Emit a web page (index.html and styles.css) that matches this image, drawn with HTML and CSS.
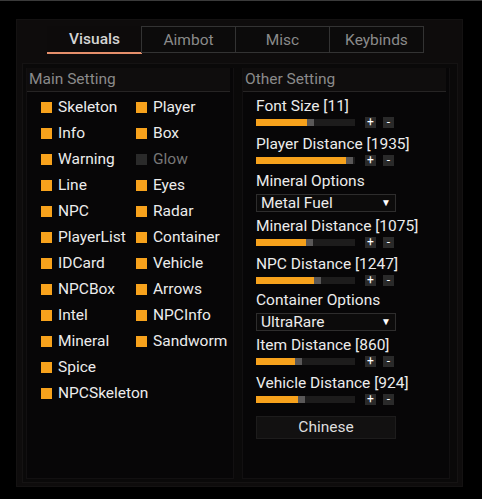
FILE: index.html
```html
<!DOCTYPE html>
<html>
<head>
<meta charset="utf-8">
<link rel="stylesheet" href="styles.css">
</head>
<body>
<div class="topline"></div>
<div class="frame">
  <div class="tabs">
    <div class="tab active">Visuals</div>
    <div class="tab">Aimbot</div>
    <div class="tab">Misc</div>
    <div class="tab">Keybinds</div>
  </div>
  <div class="content">
    <div class="col">
      <div class="head">Main Setting</div>
      <div class="checks">
        <div class="chk"><span class="box on"></span>Skeleton</div>
        <div class="chk"><span class="box on"></span>Player</div>
        <div class="chk"><span class="box on"></span>Info</div>
        <div class="chk"><span class="box on"></span>Box</div>
        <div class="chk"><span class="box on"></span>Warning</div>
        <div class="chk off"><span class="box"></span>Glow</div>
        <div class="chk"><span class="box on"></span>Line</div>
        <div class="chk"><span class="box on"></span>Eyes</div>
        <div class="chk"><span class="box on"></span>NPC</div>
        <div class="chk"><span class="box on"></span>Radar</div>
        <div class="chk"><span class="box on"></span>PlayerList</div>
        <div class="chk"><span class="box on"></span>Container</div>
        <div class="chk"><span class="box on"></span>IDCard</div>
        <div class="chk"><span class="box on"></span>Vehicle</div>
        <div class="chk"><span class="box on"></span>NPCBox</div>
        <div class="chk"><span class="box on"></span>Arrows</div>
        <div class="chk"><span class="box on"></span>Intel</div>
        <div class="chk"><span class="box on"></span>NPCInfo</div>
        <div class="chk"><span class="box on"></span>Mineral</div>
        <div class="chk"><span class="box on"></span>Sandworm</div>
        <div class="chk"><span class="box on"></span>Spice</div>
        <div class="chk empty"></div>
        <div class="chk"><span class="box on"></span>NPCSkeleton</div>
      </div>
    </div>
    <div class="col">
      <div class="head">Other Setting</div>
      <div class="opts">
        <div class="slider-group">
          <div class="label">Font Size [11]</div>
          <div class="srow"><div class="track"><div class="fill" style="width:51px"></div><div class="knob"></div></div><span class="btn">+</span><span class="btn">-</span></div>
        </div>
        <div class="slider-group">
          <div class="label">Player Distance [1935]</div>
          <div class="srow"><div class="track"><div class="fill" style="width:90px"></div><div class="knob"></div></div><span class="btn">+</span><span class="btn">-</span></div>
        </div>
        <div class="select-group">
          <div class="label">Mineral Options</div>
          <div class="select"><span>Metal Fuel</span><span class="arrow">▼</span></div>
        </div>
        <div class="slider-group">
          <div class="label">Mineral Distance [1075]</div>
          <div class="srow"><div class="track"><div class="fill" style="width:50px"></div><div class="knob"></div></div><span class="btn">+</span><span class="btn">-</span></div>
        </div>
        <div class="slider-group">
          <div class="label">NPC Distance [1247]</div>
          <div class="srow"><div class="track"><div class="fill" style="width:58px"></div><div class="knob"></div></div><span class="btn">+</span><span class="btn">-</span></div>
        </div>
        <div class="select-group second">
          <div class="label">Container Options</div>
          <div class="select"><span>UltraRare</span><span class="arrow">▼</span></div>
        </div>
        <div class="slider-group">
          <div class="label">Item Distance [860]</div>
          <div class="srow"><div class="track"><div class="fill" style="width:39px"></div><div class="knob"></div></div><span class="btn">+</span><span class="btn">-</span></div>
        </div>
        <div class="slider-group">
          <div class="label">Vehicle Distance [924]</div>
          <div class="srow"><div class="track"><div class="fill" style="width:42px"></div><div class="knob"></div></div><span class="btn">+</span><span class="btn">-</span></div>
        </div>
        <div class="button">Chinese</div>
      </div>
    </div>
  </div>
</div>
</body>
</html>
```

FILE: styles.css
```css
html, body {
  margin: 0;
  padding: 0;
  background: #000;
  width: 482px;
  height: 499px;
  overflow: hidden;
  font-family: Roboto, "Liberation Sans", sans-serif;
  font-size: 15.5px;
  color: #ececec;
}
.topline {
  height: 1px;
  background: #3a3a3a;
}
.frame {
  margin: 18px 0 0 16px;
  width: 447px;
  height: 468px;
  background: #0e0c0c;
  box-sizing: border-box;
  border: 1px solid #141212;
  padding-top: 6px;
}
.tabs {
  display: flex;
  margin-left: 30px;
  height: 28px;
}
.tab {
  width: 95px;
  height: 27px;
  box-sizing: border-box;
  border: 1px solid #333;
  margin-left: -1px;
  background: #0c0b0b;
  color: #8a8a8a;
  display: flex;
  align-items: center;
  justify-content: center;
}
.tab.active {
  border: none;
  margin-left: 0;
  height: 28px;
  border-bottom: 2px solid #e58f6b;
  color: #d4d4d4;
  font-weight: 500;
  background: #0d0b0b;
}
.content {
  margin: 9px 0 0 5px;
  width: 436px;
  height: 420px;
  box-sizing: border-box;
  background: #0a0909;
  border: 1px solid #151313;
  padding: 4px 8px 4px 3px;
  display: grid;
  grid-template-columns: 208px 208px;
  column-gap: 8px;
}
.col {
  background: #070607;
  border: 1px solid #121011;
  border-top: none;
  height: 411px;
  box-sizing: border-box;
}
.head {
  height: 23px;
  background: #0f0d0d;
  border-bottom: 1px solid #262424;
  color: #8a8a8a;
  line-height: 23px;
  padding-left: 2px;
  margin-right: 3px;
}
.checks {
  display: grid;
  grid-template-columns: 95px 95px;
  grid-auto-rows: 26px;
  padding: 2px 0 0 14px;
}
.chk {
  display: flex;
  align-items: center;
  gap: 6px;
  white-space: nowrap;
}
.box {
  width: 11px;
  height: 11px;
  background: #2a2a2a;
  flex: none;
}
.box.on {
  background: #f7a21c;
}
.chk.off {
  color: #777;
}
.opts {
  display: flex;
  flex-direction: column;
  gap: 5px;
  padding: 4px 0 0 13px;
}
.label {
  height: 20px;
  line-height: 20px;
  white-space: nowrap;
}
.slider-group {
  display: flex;
  flex-direction: column;
  gap: 1px;
  margin-bottom: 1px;
}
.srow {
  display: flex;
  align-items: center;
  height: 11px;
}
.track {
  width: 99px;
  height: 7px;
  background: #1d1c1c;
  display: flex;
}
.fill {
  height: 7px;
  background: #f7a21c;
}
.knob {
  width: 7px;
  height: 7px;
  background: #5a5858;
}
.btn {
  width: 11px;
  height: 11px;
  background: #2a2a2a;
  color: #fff;
  font-size: 12px;
  line-height: 11px;
  text-align: center;
  margin-left: 8px;
}
.btn + .btn {
  margin-left: 7px;
}
.srow .track + .btn {
  margin-left: 10px;
}
.select-group {
  display: flex;
  flex-direction: column;
  gap: 3px;
  margin-top: -1px;
  margin-bottom: -1px;
}
.select-group.second {
  margin-top: -2px;
}
.select {
  width: 140px;
  height: 18px;
  box-sizing: border-box;
  background: #0c0b0b;
  border: 1px solid #2e2d2d;
  display: flex;
  align-items: center;
  justify-content: space-between;
  padding: 0 4px 0 4px;
  line-height: 16px;
}
.arrow {
  font-size: 10px;
  color: #fff;
}
.button {
  margin-top: 5px;
  width: 140px;
  height: 23px;
  box-sizing: border-box;
  background: #121111;
  border: 1px solid #1d1c1c;
  text-align: center;
  line-height: 21px;
  color: #dedede;
}
```
